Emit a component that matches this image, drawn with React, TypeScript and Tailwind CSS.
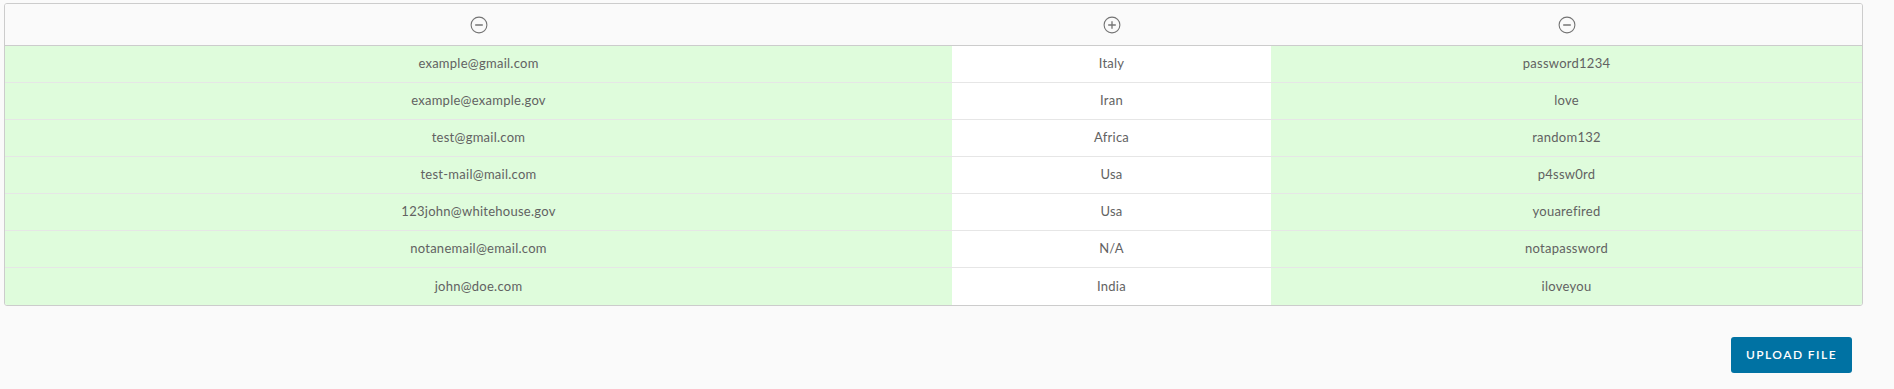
import React from "react";

const rows = [
  ["example@gmail.com", "Italy", "password1234"],
  ["example@example.gov", "Iran", "love"],
  ["test@gmail.com", "Africa", "random132"],
  ["test-mail@mail.com", "Usa", "p4ssw0rd"],
  ["123john@whitehouse.gov", "Usa", "youarefired"],
  ["notanemail@email.com", "N/A", "notapassword"],
  ["john@doe.com", "India", "iloveyou"],
];

function CircleIcon({ plus }: { plus?: boolean }) {
  return (
    <svg width="18" height="18" viewBox="0 0 18 18" fill="none" stroke="#747474" strokeWidth="1.1">
      <circle cx="9" cy="9" r="7.9" />
      <line x1="5.2" y1="9" x2="12.8" y2="9" strokeWidth="1.3" />
      {plus && <line x1="9" y1="5.2" x2="9" y2="12.8" strokeWidth="1.3" />}
    </svg>
  );
}

export default function App() {
  return (
    <div
      className="min-h-[389px] w-[1894px] bg-[#fafafa] pt-[3px] pl-[4px]"
      style={{ fontFamily: "Lato, 'Open Sans', sans-serif" }}
    >
      <div className="w-[1859px] rounded-[3px] border border-[#cccccc] overflow-hidden bg-white">
        <div className="grid grid-cols-[947px_319px_1fr] h-[42px] bg-[#fafafa] border-b border-[#cccccc]">
          <div className="flex items-center justify-center"><CircleIcon /></div>
          <div className="flex items-center justify-center"><CircleIcon plus /></div>
          <div className="flex items-center justify-center"><CircleIcon /></div>
        </div>
        {rows.map((r, i) => (
          <div
            key={i}
            className={`grid grid-cols-[947px_319px_1fr] h-[37px] text-[13px] tracking-[0.02em] text-[#626262] ${
              i < rows.length - 1 ? "border-b border-[#e6e6e6]" : ""
            }`}
          >
            <div className="flex items-center justify-center bg-[#dffcdc]">{r[0]}</div>
            <div className="flex items-center justify-center bg-white">{r[1]}</div>
            <div className="flex items-center justify-center bg-[#dffcdc]">{r[2]}</div>
          </div>
        ))}
      </div>
      <div className="flex justify-end pr-[42px] mt-[31px]">
        <button className="h-[36px] w-[121px] rounded-[3px] bg-[#0072a3] text-white text-[12px] font-semibold tracking-[0.12em] uppercase">
          Upload File
        </button>
      </div>
    </div>
  );
}
